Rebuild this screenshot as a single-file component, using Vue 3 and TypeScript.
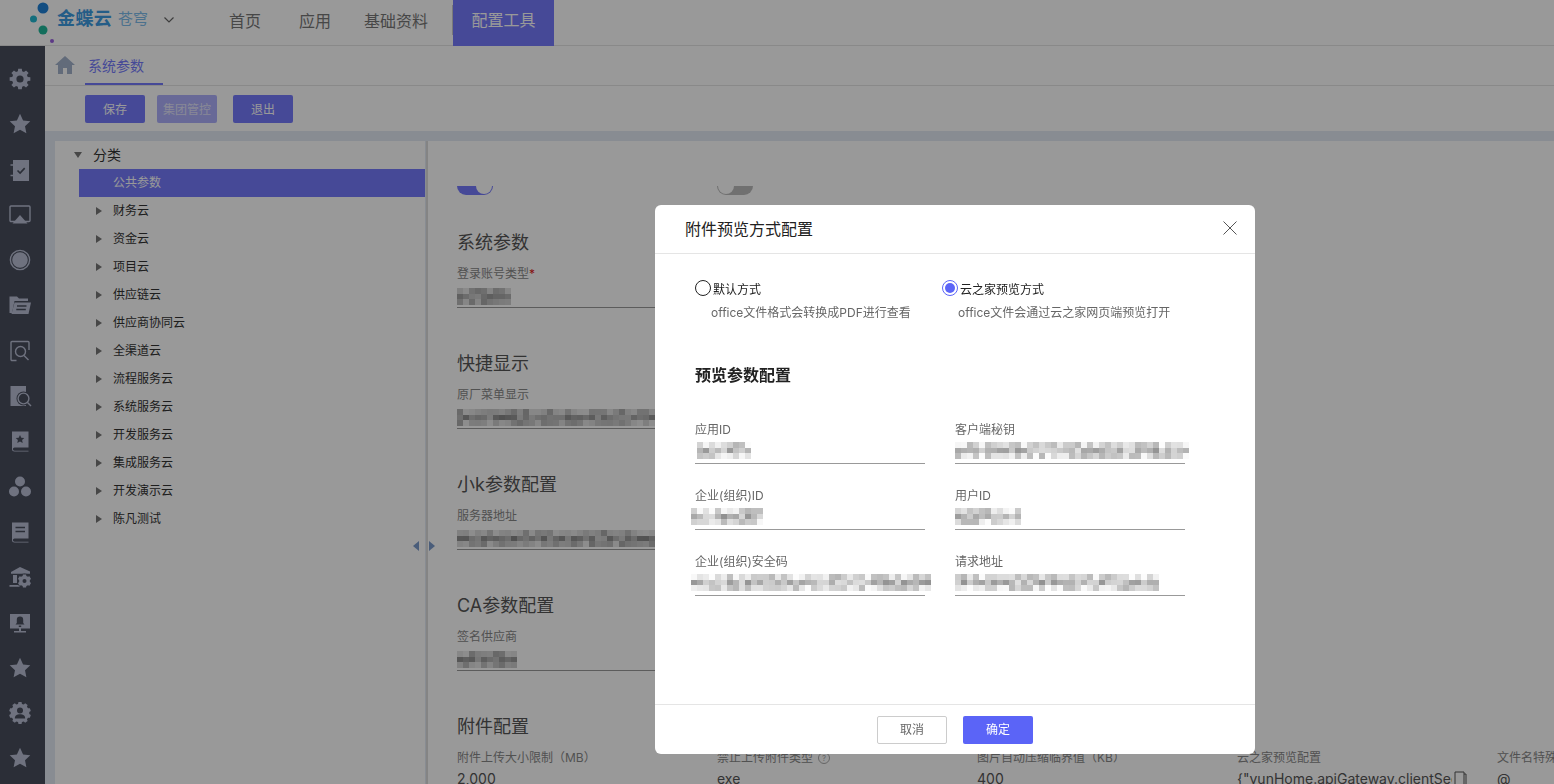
<script setup lang="ts">
import { ref } from 'vue'

type Layer = ['f' | 'l' | 'c' | 'h', string]

const circle = (cx: number, cy: number, r: number) =>
  `M${cx - r} ${cy}a${r} ${r} 0 1 0 ${r * 2} 0a${r} ${r} 0 1 0 ${-r * 2} 0z`

// toothed ring, used by the gear and the badge icon
const toothed = (teeth: number, outer: number, inner: number) => {
  const pts: string[] = []
  const step = (Math.PI * 2) / teeth
  for (let i = 0; i < teeth; i++) {
    const a = i * step - Math.PI / 2
    const list: [number, number][] = [
      [a - step * 0.22, outer],
      [a + step * 0.22, outer],
      [a + step * 0.34, inner],
      [a + step * 0.66, inner]
    ]
    list.forEach(([t, r]) => pts.push(`${(12 + r * Math.cos(t)).toFixed(2)} ${(12 + r * Math.sin(t)).toFixed(2)}`))
  }
  return `M${pts.join('L')}z`
}

const star = 'M12 1.8l3.1 6.6 7.2.9-5.3 4.9 1.4 7.1-6.4-3.5-6.4 3.5 1.4-7.1-5.3-4.9 7.2-.9z'
const book = 'M4 2.5h16.5v16H6.5a1.6 1.6 0 0 0 0 3.2h14v.8h-14A2.5 2.5 0 0 1 4 20z'

const icons: Layer[][] = [
  [['f', toothed(8, 10.5, 8)], ['h', circle(12, 12, 3.6)]],
  [['f', star]],
  [['f', 'M5 2h16v21H5z'], ['c', 'M9.5 12.5l2.6 2.6 4.6-5'], ['l', 'M2.5 7h4M2.5 17.5h4']],
  [['l', 'M7 18.5H3a1 1 0 0 1-1-1V4a1 1 0 0 1 1-1h18a1 1 0 0 1 1 1v13.5a1 1 0 0 1-1 1h-4'], ['f', 'M12 12l7.5 8.5h-15z']],
  [['l', circle(12, 12, 9.6)], ['f', circle(12, 12, 7.8)]],
  [['f', 'M1.5 20V3.5h7.5l2 2h9V8H6.5L4 20z'], ['f', 'M6.5 9.5H23L20.5 21H3.5z'], ['c', 'M9 13h9.5M8.3 16.5h9.5']],
  [['l', 'M8.5 21.5H4a1 1 0 0 1-1-1V3.5a1 1 0 0 1 1-1h16a1 1 0 0 1 1 1V11'], ['l', circle(12.5, 12.5, 5)], ['l', 'M16 16.5l4.5 4.5']],
  [['f', 'M2.5 2h15.5v20H2.5z'], ['h', circle(15.5, 14.5, 7)], ['l', circle(15.5, 14.5, 5.4)], ['l', 'M19.5 18.5l3.5 3.5']],
  [['f', book], ['h', 'M12 6l1.3 2.7 3 .4-2.2 2 .6 3-2.7-1.5-2.7 1.5.6-3-2.2-2 3-.4z']],
  [['f', circle(12, 6.5, 5)], ['f', circle(6, 16.5, 5)], ['f', circle(18, 16.5, 5)]],
  [['f', book], ['c', 'M7.5 7.5h9.5M7.5 11.5h9.5']],
  [['f', 'M12 2l10 4.5v2.2H3V7z'], ['f', 'M5 10h4v8H5zM1.5 20h11v1.8h-11z'], ['h', circle(16.5, 16, 7.5)], ['f', toothed(6, 6.8, 5.4).replace(/(\d+\.\d+) (\d+\.\d+)/g, (_, x, y) => `${(+x + 4.5).toFixed(2)} ${(+y + 4).toFixed(2)}`)], ['h', circle(16.5, 16, 2)]],
  [['f', 'M2 3h20v14.5H2zM11 17.5h2V20h5v1.5H6V20h5z'], ['h', 'M12 5.5a3.2 3.2 0 0 1 3.2 3.2V12l1.3 1.6h-9L8.8 12V8.7A3.2 3.2 0 0 1 12 5.5zM10.8 14.4h2.4V16h-2.4z']],
  [['f', star]],
  [['f', toothed(10, 11, 9.3)], ['h', circle(12, 9.4, 3)], ['h', 'M6.8 17.5c0-3 2.2-4.2 5.2-4.2s5.2 1.2 5.2 4.2z']],
  [['f', star]]
]

const treeItems = ['财务云', '资金云', '项目云', '供应链云', '供应商协同云', '全渠道云', '流程服务云', '系统服务云', '开发服务云', '集成服务云', '开发演示云', '陈凡测试']
const navItems = ['首页', '应用', '基础资料']

// stand-in for the blurred values in the screenshot
const mosaic = (seed: number, width: number, rows: number, base: number, spread: number) => {
  let s = seed
  const next = () => {
    s = (s * 9301 + 49297) % 233280
    return s / 233280
  }
  const cols = Math.ceil(width / 6)
  const cells: string[] = []
  for (let r = 0; r < rows; r++) {
    for (let c = 0; c < cols; c++) {
      const tone = r === 1
        ? base + next() * spread
        : base + spread * 0.45 + next() * spread * 0.9
      const v = Math.round(Math.min(255, tone))
      cells.push(`rgb(${v},${v},${v})`)
    }
  }
  return { cols, cells }
}

const sections = [
  { title: '系统参数', label: '登录账号类型', required: true, seed: 11, width: 54, rows: 3 },
  { title: '快捷显示', label: '原厂菜单显示', required: false, seed: 23, width: 198, rows: 3 },
  { title: '小k参数配置', label: '服务器地址', required: false, seed: 37, width: 198, rows: 3 },
  { title: 'CA参数配置', label: '签名供应商', required: false, seed: 41, width: 60, rows: 3 }
].map((s) => ({ ...s, blur: mosaic(s.seed, s.width, s.rows, 135, 75) }))

const bottomFields = [
  { label: '附件上传大小限制（MB）', value: '2,000', help: false, copy: false },
  { label: '禁止上传附件类型', value: 'exe', help: true, copy: false },
  { label: '图片自动压缩临界值（KB）', value: '400', help: false, copy: false },
  { label: '云之家预览配置', value: '{"yunHome.apiGateway.clientSecret":""}', help: false, copy: true },
  { label: '文件名特殊字符', value: '@', help: false, copy: false }
]

const dialogFields = [
  { label: '应用ID', seed: 5, width: 54, shift: 2 },
  { label: '客户端秘钥', seed: 17, width: 232, shift: 0 },
  { label: '企业(组织)ID', seed: 29, width: 72, shift: -4 },
  { label: '用户ID', seed: 31, width: 66, shift: 0 },
  { label: '企业(组织)安全码', seed: 43, width: 240, shift: -4 },
  { label: '请求地址', seed: 53, width: 204, shift: 0 }
].map((f) => ({ ...f, blur: mosaic(f.seed, f.width, 3, 145, 80) }))

const previewMode = ref('yzj')
</script>

<template>
  <div class="page">
    <header class="topbar">
      <div class="logo">
        <svg class="logo-dots" width="30" height="46" viewBox="0 0 30 46">
          <circle cx="13" cy="8" r="5.5" fill="#1f80d8" />
          <circle cx="3.5" cy="19" r="3.5" fill="#22b8d0" />
          <circle cx="13" cy="30" r="4.5" fill="#1fb89a" />
          <circle cx="22" cy="41" r="2" fill="#9a5fe0" />
        </svg>
        <span class="logo-main">金蝶云</span>
        <span class="logo-sub">苍穹</span>
        <svg class="logo-caret" width="12" height="8" viewBox="0 0 12 8">
          <path d="M1.5 1.5L6 6l4.5-4.5" fill="none" stroke="#666" stroke-width="1.2" />
        </svg>
      </div>
      <nav class="nav">
        <a v-for="item in navItems" :key="item" class="nav-item">{{ item }}</a>
        <span class="nav-sep"></span>
        <a class="nav-active">配置工具</a>
      </nav>
    </header>

    <div class="body">
      <aside class="side">
        <svg v-for="(icon, i) in icons" :key="i" class="side-icon" width="24" height="24" viewBox="0 0 24 24">
          <path v-for="(layer, j) in icon" :key="j" :class="'ly-' + layer[0]" :d="layer[1]" />
        </svg>
      </aside>

      <main class="main">
        <div class="tabs">
          <svg class="home" width="20" height="18" viewBox="0 0 20 18">
            <path d="M10 0L20 9h-3v9h-5v-6H8v6H3V9H0z" fill="#a3b3cc" />
          </svg>
          <div class="tab">系统参数</div>
        </div>
        <div class="toolbar">
          <button class="tool-btn">保存</button>
          <button class="tool-btn disabled">集团管控</button>
          <button class="tool-btn last">退出</button>
        </div>

        <div class="work">
          <div class="tree">
            <div class="tree-root"><i class="caret-down"></i>分类</div>
            <div class="tree-row selected">公共参数</div>
            <div v-for="item in treeItems" :key="item" class="tree-row"><i class="caret-right"></i>{{ item }}</div>
          </div>
          <div class="split">
            <i class="arrow-left"></i>
            <i class="arrow-right"></i>
          </div>
          <div class="content">
            <div class="toggles">
              <div class="toggle-clip"><span class="toggle on"></span></div>
              <div class="toggle-clip"><span class="toggle off"></span></div>
            </div>
            <section v-for="s in sections" :key="s.title" class="section">
              <h3>{{ s.title }}</h3>
              <div class="bg-label">{{ s.label }}<em v-if="s.required">*</em></div>
              <div class="bg-control">
                <div class="blur" :style="{ gridTemplateColumns: `repeat(${s.blur.cols}, 6px)` }">
                  <span v-for="(c, i) in s.blur.cells" :key="i" :style="{ background: c }"></span>
                </div>
              </div>
            </section>
            <section class="section">
              <h3>附件配置</h3>
              <div class="bottom-row">
                <div v-for="f in bottomFields" :key="f.label" class="bottom-field">
                  <div class="bg-label nowrap">{{ f.label }}<span v-if="f.help" class="help">?</span></div>
                  <div class="bottom-value">
                    <span class="value-text">{{ f.value }}</span>
                    <svg v-if="f.copy" class="copy" width="13" height="14" viewBox="0 0 13 14">
                      <path d="M1 14V1h9v13M10 3h2v11" fill="none" stroke="#555" />
                    </svg>
                  </div>
                </div>
              </div>
            </section>
          </div>
        </div>
      </main>
    </div>

    <div class="mask">
      <div class="dialog">
        <div class="dialog-head">
          <span>附件预览方式配置</span>
          <svg width="14" height="14" viewBox="0 0 14 14">
            <path d="M.5.5l13 13M13.5.5l-13 13" stroke="#555" fill="none" />
          </svg>
        </div>
        <div class="dialog-body">
          <div class="radios">
            <div class="radio-col">
              <label class="radio-line" @click="previewMode = 'default'">
                <i class="radio" :class="{ checked: previewMode === 'default' }"></i>默认方式
              </label>
              <p class="radio-desc">office文件格式会转换成PDF进行查看</p>
            </div>
            <div class="radio-col">
              <label class="radio-line" @click="previewMode = 'yzj'">
                <i class="radio" :class="{ checked: previewMode === 'yzj' }"></i>云之家预览方式
              </label>
              <p class="radio-desc">office文件会通过云之家网页端预览打开</p>
            </div>
          </div>
          <h4>预览参数配置</h4>
          <div class="field-grid">
            <div v-for="f in dialogFields" :key="f.label" class="field">
              <div class="field-label">{{ f.label }}</div>
              <div class="field-control">
                <div class="blur" :style="{ gridTemplateColumns: `repeat(${f.blur.cols}, 6px)`, marginLeft: f.shift + 'px' }">
                  <span v-for="(c, i) in f.blur.cells" :key="i" :style="{ background: c }"></span>
                </div>
              </div>
            </div>
          </div>
        </div>
        <div class="dialog-foot">
          <button class="btn-cancel">取消</button>
          <button class="btn-ok">确定</button>
        </div>
      </div>
    </div>
  </div>
</template>

<style scoped>
.page {
  height: 100vh;
  display: flex;
  flex-direction: column;
  overflow: hidden;
  background: #fff;
  color: #333;
  font-family: Inter, "Noto Sans CJK SC", sans-serif;
}

.topbar {
  height: 46px;
  flex: none;
  display: flex;
  box-sizing: border-box;
  border-bottom: 1px solid #e5e5e5;
}
.logo {
  width: 229px;
  padding: 0 0 0 30px;
  box-sizing: border-box;
  display: flex;
  align-items: flex-start;
}
.logo-dots { flex: none; margin-right: -3px; }
.logo-main {
  font-size: 18px;
  font-weight: 700;
  color: #3d9be2;
  letter-spacing: 0.4px;
  width: 61px;
  line-height: 38px;
}
.logo-sub {
  font-size: 15px;
  color: #7dbcec;
  width: 45px;
  line-height: 38px;
}
.logo-caret { flex: none; margin-top: 16px; }
.nav { display: flex; align-items: center; height: 39px; font-size: 16px; color: #777; }
.nav-item { margin-right: 38px; white-space: nowrap; }
.nav-item:nth-child(2) { margin-right: 33px; }
.nav-item:nth-child(3) { margin-right: 24px; }
.nav-sep { width: 1px; height: 30px; background: #ccc; }
.nav-active {
  height: 46px;
  width: 101px;
  line-height: 40px;
  text-align: center;
  color: #fff;
  background: #767bfc;
  align-self: flex-start;
}

.body { flex: 1; display: flex; min-height: 0; }
.side {
  width: 45px;
  flex: none;
  background: #484d5d;
  padding: 21px 5px 0 0;
  box-sizing: border-box;
  display: flex;
  flex-direction: column;
  align-items: center;
  gap: 21.3px;
}
.side-icon { flex: none; }
.ly-f { fill: #b9bfd4; }
.ly-h { fill: #484d5d; }
.ly-l { fill: none; stroke: #b9bfd4; stroke-width: 1.4; }
.ly-c { fill: none; stroke: #484d5d; stroke-width: 1.6; }

.main { flex: 1; min-width: 0; display: flex; flex-direction: column; }
.tabs {
  height: 40px;
  flex: none;
  display: flex;
  box-sizing: border-box;
  border-bottom: 1px solid #e5e5e5;
  padding-left: 10px;
  align-items: flex-start;
}
.home { margin-top: 10px; margin-right: 10px; }
.tab {
  width: 78px;
  height: 39px;
  padding-left: 3px;
  box-sizing: border-box;
  line-height: 39px;
  font-size: 14px;
  color: #767bfc;
  border-bottom: 2px solid #767bfc;
}
.toolbar {
  height: 45px;
  flex: none;
  box-sizing: border-box;
  padding: 9px 0 0 40px;
  display: flex;
  gap: 12px;
}
.tool-btn {
  width: 60px;
  height: 28px;
  border: none;
  border-radius: 2px;
  color: #fff;
  font: inherit;
  font-size: 12px;
  background: #767bfc;
  padding: 0 0 2px;
}
.tool-btn.disabled { background: #adb0fc; color: #e4e4fa; }
.tool-btn.last { margin-left: 4px; }

.work {
  flex: 1;
  min-height: 0;
  display: flex;
  background: #e3eaf3;
  padding: 10px 0 0 10px;
}
.tree {
  width: 370px;
  flex: none;
  background: #fff;
  padding-left: 24px;
  box-sizing: border-box;
  font-size: 12px;
}
.tree-root {
  height: 28px;
  line-height: 28px;
  font-size: 14px;
  display: flex;
  align-items: center;
  margin-left: -5px;
}
.tree-row {
  height: 28px;
  line-height: 28px;
  padding-left: 17px;
  display: flex;
  align-items: center;
}
.tree-row.selected {
  padding-left: 34px;
  color: #fff;
  background: #767bfc;
}
.caret-down {
  width: 0;
  height: 0;
  border: 4px solid transparent;
  border-top: 6px solid #777;
  border-bottom: 0;
  margin-right: 11px;
}
.caret-right {
  width: 0;
  height: 0;
  border: 4px solid transparent;
  border-left: 6px solid #777;
  border-right: 0;
  margin-right: 11px;
}
.split {
  width: 2px;
  flex: none;
  margin-left: 1px;
  background: #dcdcdc;
  position: relative;
}
.arrow-left, .arrow-right {
  position: absolute;
  top: 400px;
  width: 0;
  height: 0;
  border: 5px solid transparent;
}
.arrow-left { left: -13px; border-right: 6px solid #7c9ccc; border-left: 0; }
.arrow-right { left: 3px; border-left: 6px solid #7c9ccc; border-right: 0; }

.content {
  flex: 1;
  min-width: 0;
  background: #fff;
  overflow: hidden;
  padding: 45px 0 0 29px;
}
.toggles { display: flex; gap: 224px; margin-bottom: 36px; }
.toggle-clip { width: 36px; height: 9px; overflow: hidden; position: relative; }
.toggle {
  position: absolute;
  left: 0;
  bottom: 0;
  width: 36px;
  height: 18px;
  border-radius: 9px;
}
.toggle::after {
  content: "";
  position: absolute;
  top: 1px;
  width: 16px;
  height: 16px;
  border-radius: 50%;
  background: #fff;
}
.toggle.on { background: #767bfc; }
.toggle.on::after { right: 1px; }
.toggle.off { background: #bbb; }
.toggle.off::after { left: 1px; }

.section { height: 121px; }
h3 {
  margin: 0 0 10px;
  font-size: 18px;
  font-weight: 400;
  line-height: 24px;
  color: #555;
}
.bg-label { height: 18px; line-height: 18px; font-size: 12px; color: #888; }
.bg-label em { color: #e02020; font-style: normal; }
.nowrap { white-space: nowrap; }
.bg-control {
  width: 230px;
  height: 25px;
  box-sizing: border-box;
  border-bottom: 1px solid #999;
  padding-top: 5px;
}
.blur { display: grid; grid-auto-rows: 5.5px; }
.blur span { display: block; }
.help {
  display: inline-block;
  width: 10px;
  height: 10px;
  border: 1px solid #aaa;
  border-radius: 50%;
  font-size: 8px;
  line-height: 10px;
  text-align: center;
  color: #aaa;
  margin-left: 5px;
  vertical-align: 1px;
}
.bottom-row { display: flex; gap: 30px; }
.bottom-field { width: 230px; flex: none; }
.bottom-value {
  display: flex;
  align-items: center;
  height: 22px;
  font-size: 14px;
  color: #555;
}
.value-text { max-width: 215px; overflow: hidden; white-space: nowrap; }
.copy { margin-left: 2px; flex: none; }

.mask {
  position: fixed;
  inset: 0;
  background: rgba(0, 0, 0, 0.4);
  padding: 205px 0 0 655px;
  box-sizing: border-box;
}
.dialog {
  width: 600px;
  height: 549px;
  background: #fff;
  border-radius: 6px;
  display: flex;
  flex-direction: column;
}
.dialog-head {
  height: 49px;
  flex: none;
  box-sizing: border-box;
  border-bottom: 1px solid #e5e5e5;
  padding: 0 18px 2px 30px;
  display: flex;
  align-items: center;
  justify-content: space-between;
  font-size: 16px;
  color: #212121;
}
.dialog-body { flex: 1; padding: 25px 40px 0; }
.radios { display: flex; }
.radio-col { width: 247px; }
.radio-line {
  display: flex;
  align-items: center;
  height: 18px;
  gap: 2px;
  font-size: 12px;
  color: #212121;
}
.radio {
  width: 16px;
  height: 16px;
  box-sizing: border-box;
  border: 1px solid #212121;
  border-radius: 50%;
  position: relative;
  flex: none;
}
.radio.checked { border-color: #5b64f7; }
.radio.checked::after {
  content: "";
  position: absolute;
  inset: 2px;
  border-radius: 50%;
  background: #5b64f7;
}
.radio-desc {
  margin: 7px 0 0 16px;
  line-height: 18px;
  font-size: 12px;
  color: #666;
}
h4 {
  margin: 41px 0 34px;
  font-size: 16px;
  font-weight: 700;
  line-height: 24px;
  color: #212121;
}
.field-grid {
  display: grid;
  grid-template-columns: 230px 230px;
  column-gap: 30px;
  row-gap: 23px;
}
.field-label { height: 18px; line-height: 18px; font-size: 12px; color: #666; white-space: nowrap; }
.field-control {
  height: 25px;
  box-sizing: border-box;
  border-bottom: 1px solid #999;
  padding-top: 3px;
}
.dialog-foot {
  height: 50px;
  flex: none;
  box-sizing: border-box;
  border-top: 1px solid #e5e5e5;
  display: flex;
  align-items: center;
  justify-content: center;
  gap: 16px;
}
.btn-cancel, .btn-ok {
  width: 70px;
  height: 28px;
  border-radius: 2px;
  font: inherit;
  font-size: 12px;
  padding: 0 0 2px;
}
.btn-cancel { background: #fff; border: 1px solid #ccc; color: #666; }
.btn-ok { background: #5b64f7; border: none; color: #fff; }
</style>

<style>
html, body { margin: 0; overflow: hidden; }
</style>
